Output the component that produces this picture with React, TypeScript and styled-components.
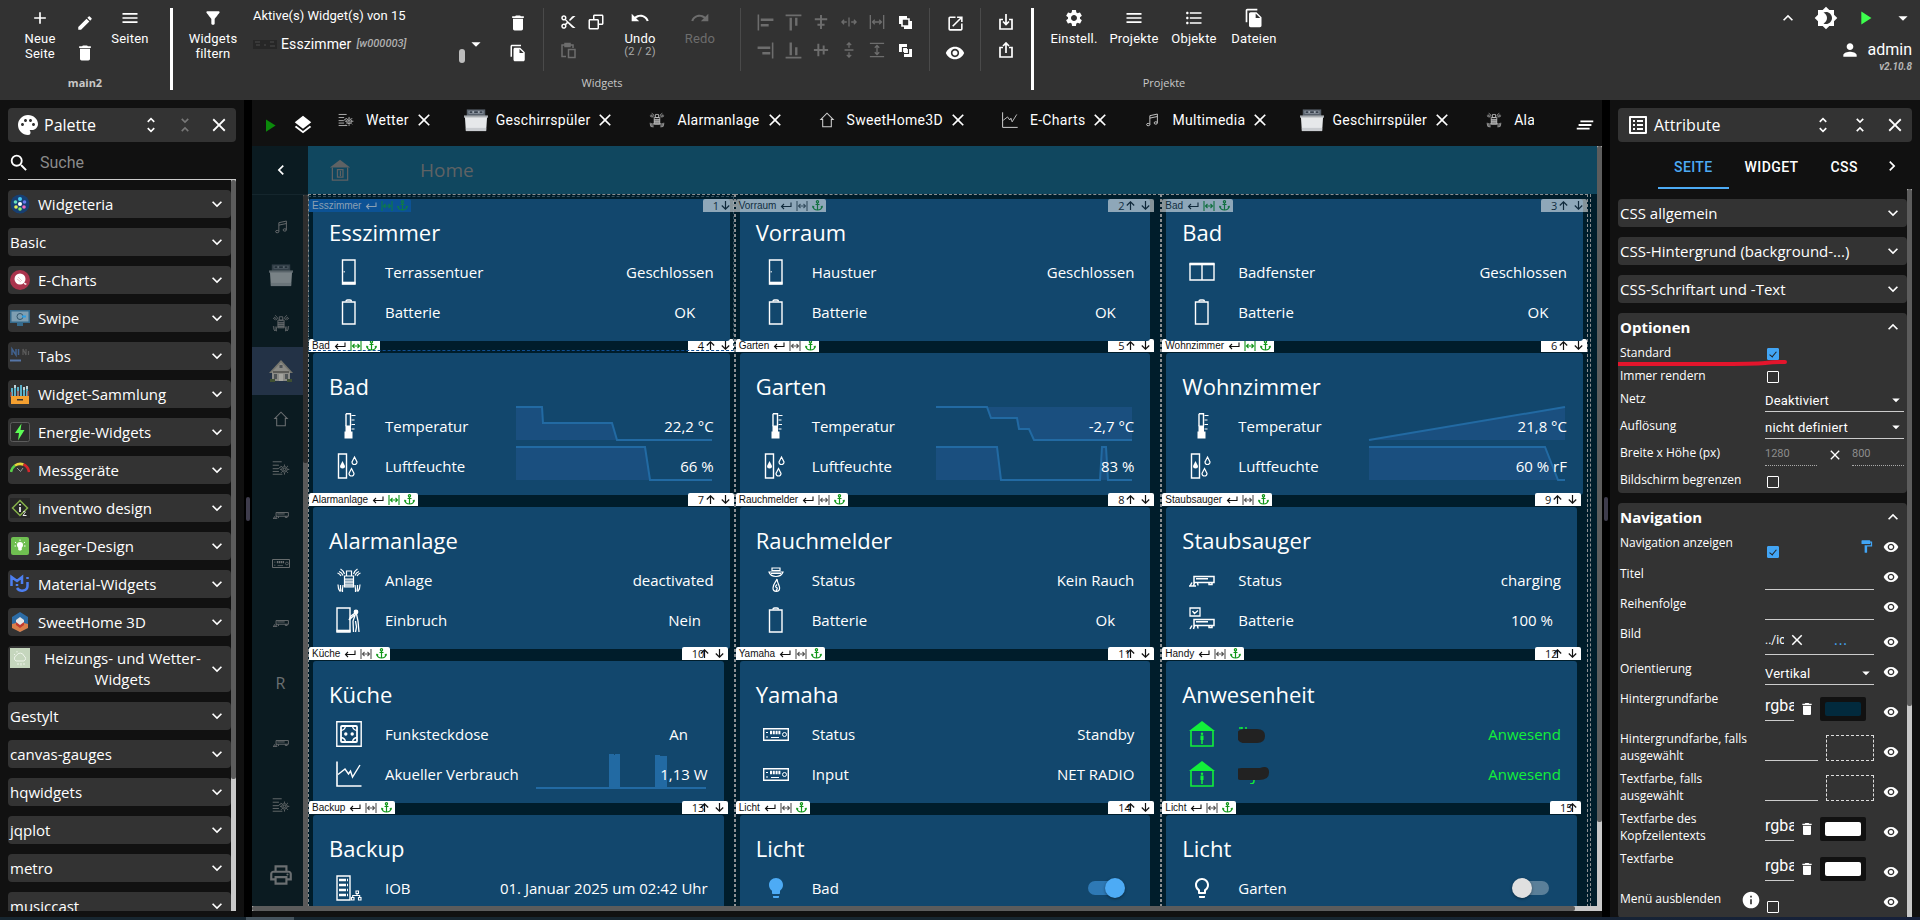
import React from "react";
import styled, { createGlobalStyle, css } from "styled-components";
import {
  MdAdd, MdEdit, MdDelete, MdMenu, MdFilterAlt, MdFileCopy, MdUndo, MdRedo, MdOpenInNew, MdVisibility,
  MdSettings, MdFormatListBulleted, MdBrightness4, MdPlayArrow, MdArrowDropDown, MdPerson, MdKeyboardArrowUp,
  MdKeyboardArrowDown, MdPalette, MdUnfoldMore, MdUnfoldLess, MdClose, MdSearch, MdLayers, MdClearAll,
  MdListAlt, MdOutlinePrint, MdInfo, MdFormatPaint, MdLightbulb, MdOutlineLightbulb, MdChevronLeft,
  MdChevronRight, MdAlignHorizontalLeft, MdAlignHorizontalRight, MdAlignVerticalTop, MdAlignVerticalBottom,
} from "react-icons/md";
import { BiCut, BiCopy } from "react-icons/bi";

const ui = `"Open Sans", "Noto Sans", sans-serif`;
const roboto = `Roboto, "Liberation Sans", sans-serif`;

const GlobalStyle = createGlobalStyle`
  *, *::before, *::after { box-sizing: border-box; }
  html, body { margin: 0; background: #111; overflow: hidden; }
  button, input, select { font: inherit; color: inherit; background: none; border: 0; padding: 0; margin: 0; border-radius: 0; }
  button { cursor: pointer; }
  svg { display: block; flex: none; }
`;

/* ---------- page frame ---------- */
const Page = styled.div`
  display: flex; flex-direction: column; height: 100vh; color: #fff; background: #111;
  font: 15px/20px ${ui};
`;
const Main = styled.main`display: flex; flex: 1; min-height: 0;`;
const Footer = styled.footer`
  height: 3px; flex: none; background: linear-gradient(90deg, #172630 0 246px, #45535d 246px 294px, #172630 294px 70%, #16203a);
`;
const Splitter = styled.div`
  width: 8px; flex: none; background: #000; display: flex; align-items: center; justify-content: center;
  &::after { content: ""; width: 4px; height: 24px; border-radius: 2px; background: #3e3c4c; }
`;
const Track = styled.div<{ $thumb: string; $color?: string; $rest?: string; $row?: boolean }>`
  flex: none; ${p => (p.$row ? "height: 5px" : "width: 5px")};
  background: ${p => p.$rest ?? "#c9c9c9"};
  &::before {
    content: ""; display: block; border-radius: 2px; background: ${p => p.$color ?? "#5c5c5c"};
    ${p => (p.$row ? `height: 5px; width: ${p.$thumb}` : `height: ${p.$thumb}`)};
  }
`;
const BottomGap = styled.div`height: 6px; flex: none;`;

/* ---------- toolbar ---------- */
const Toolbar = styled.header`
  height: 100px; flex: none; background: #323232; display: flex; align-items: flex-start; padding-top: 8px;
  font-family: ${roboto};
`;
const Group = styled.section`display: flex; flex-direction: column; align-items: center;`;
const GroupRow = styled.div`display: flex; align-items: flex-start; height: 67px; padding: 0 10px;`;
const Caption = styled.div<{ $bold?: boolean }>`
  font: ${p => (p.$bold ? 700 : 400)} 11px/16px ${ui}; color: #c8c8c8;
`;
const Bar = styled.div`width: 3px; height: 82px; background: #fff; flex: none;`;
const Thin = styled.div`width: 1px; height: 63px; background: #4a4a4a; margin: 0 10px; flex: none;`;
const BigButton = styled.button<{ $dim?: boolean }>`
  width: 60px; display: flex; flex-direction: column; align-items: center; gap: 3px; color: ${p => (p.$dim ? "#6d6d6d" : "#fff")};
  font: 13px/15px ${roboto}; letter-spacing: 0.2px; text-align: center;
  small { display: block; font-size: 11px; line-height: 12px; color: #aaa; }
`;
const Stack = styled.div<{ $cols?: number; $cell?: number; $w?: number }>`
  display: grid; grid-template-columns: repeat(${p => p.$cols ?? 1}, ${p => p.$w ?? 30}px); grid-auto-rows: ${p => p.$cell ?? 30}px;
`;
const ToolButton = styled.button<{ $dim?: boolean }>`
  display: grid; place-items: center; color: ${p => (p.$dim ? "#6d6d6d" : "#fff")};
`;
const Active = styled.div`width: 260px; padding: 0 16px 0 10px; font-size: 13px; line-height: 16px;`;
const ActiveSelect = styled.button`
  width: 100%; height: 40px; display: flex; align-items: center; font: 14px/20px ${roboto}; letter-spacing: 0.1px;
  em { font: italic 500 11px/20px ${roboto}; color: #b0b0b0; margin-left: 5px; letter-spacing: 0; }
  svg:first-child { margin-right: 4px; }
`;
const ActiveEnd = styled.span`
  margin-left: auto; display: flex; align-items: center;
  i { width: 6px; height: 14px; border-radius: 3px; background: #bdbdbd; margin-top: 24px; }
`;
const User = styled.div`margin-left: auto; padding-right: 8px; display: flex; flex-direction: column; align-items: flex-end;`;
const UserIcons = styled.div`display: flex; height: 20px; align-items: center; gap: 16px; margin-right: -2px;`;
const UserName = styled.div`display: flex; align-items: center; gap: 8px; font: 16px/20px ${roboto}; margin-top: 12px;`;
const Version = styled.div`font: italic 700 10px/14px ${roboto}; color: #b5b5b5;`;

/* ---------- side panels ---------- */
const Panel = styled.aside<{ $w: number }>`
  width: ${p => p.$w}px; flex: none; display: flex; flex-direction: column; padding: 8px 8px 0; background: #111;
`;
const PanelHead = styled.div`
  height: 34px; flex: none; display: flex; align-items: center; background: #333; border-radius: 4px; padding: 0 5px 0 8px; font: 16px/20px ${ui};
  h2 { font: inherit; margin: 0 auto 0 4px; }
`;
const HeadButton = styled.button<{ $dim?: boolean; $w?: number }>`
  width: ${p => p.$w ?? 34}px; height: 34px; display: grid; place-items: center; color: ${p => (p.$dim ? "#777" : "#fff")};
  &:last-child { width: 24px; margin-left: 5px; }
`;
const Search = styled.label`
  display: flex; align-items: center; height: 38px; border-bottom: 1px solid #ccc; flex: none; gap: 10px; padding-top: 5px;
  input { flex: 1; min-width: 0; outline: 0; font-size: 16px; font-family: ${roboto}; }
  input::placeholder { color: #8b8b8b; opacity: 1; }
`;
const Scroll = styled.div`flex: 1; min-height: 0; display: flex;`;
const List = styled.div`flex: 1; min-width: 0; overflow: hidden; padding-top: 10px; display: flex; flex-direction: column; gap: 10px;`;
const Fold = styled.button`
  flex: none; min-height: 28px; display: flex; align-items: center; background: #333; border-radius: 4px; padding: 2px 4px 2px 2px;
  font: 15px/21px ${ui}; text-align: left;
  > span { flex: 1; display: flex; align-items: flex-start; gap: 8px; }
`;
const FoldName = styled.span<{ $center?: boolean }>`flex: 1; text-align: ${p => (p.$center ? "center" : "left")};`;
const FoldBadge = styled.svg`width: 20px; height: 20px;`;

/* ---------- attribute panel ---------- */
const Tabs = styled.nav`display: flex; height: 47px; flex: none; padding-left: 40px; align-items: stretch;`;
const TabButton = styled.button<{ $on?: boolean }>`
  padding: 4px 16px 0; font: 500 14px/20px ${roboto}; letter-spacing: 0.4px; color: ${p => (p.$on ? "#4dabf5" : "#fff")};
  border-bottom: 2px solid ${p => (p.$on ? "#4dabf5" : "transparent")};
`;
const NextTab = styled.button`margin-left: auto; padding-right: 10px;`;
const Box = styled.section`flex: none; background: #333; border-radius: 4px; padding: 0 3px 1px 2px;`;
const BoxHead = styled.h3`
  margin: 0; height: 28px; display: flex; align-items: center; justify-content: space-between; font: 700 15px/28px ${ui}; padding-right: 1px;
`;
const Field = styled.div<{ $h: number }>`
  display: grid; grid-template-columns: 145px minmax(0, 1fr) auto; height: ${p => p.$h}px; align-items: end;
  > label { align-self: start; font: 12px/17px ${ui}; padding-top: 3px; display: flex; justify-content: space-between; }
`;
const Cell = styled.div<{ $pad?: number }>`
  display: flex; align-items: flex-end; padding-bottom: ${p => p.$pad ?? 2}px; height: 100%;
`;
const Eye = styled.button`width: 30px; height: 30px; padding-left: 4px; display: grid; place-items: center;`;
const Check = styled.input`
  appearance: none; width: 12px; height: 12px; border: 1px solid #fff; border-radius: 1px; margin: 0 0 2px 2px; display: grid; place-items: center;
  &:checked { background: #42a5f5; border-color: #42a5f5; }
  &:checked::after { content: ""; width: 4px; height: 7px; margin-top: -2px; border: solid #222; border-width: 0 1px 1px 0; transform: rotate(40deg); }
`;
const SelectWrap = styled.div`
  flex: 1; position: relative; border-bottom: 1px solid #ccc; height: 23px;
  select { appearance: none; width: 100%; height: 22px; font: 13px/20px ${roboto}; letter-spacing: 0.2px; outline: 0; }
  svg { position: absolute; right: -1px; top: 2px; pointer-events: none; }
`;
const Line = styled.input<{ $w?: number; $dots?: boolean; $size?: number }>`
  ${p => (p.$w ? `width: ${p.$w}px; flex: none;` : "flex: 1; min-width: 0;")}
  height: ${p => (p.$size === 16 ? 30 : 24)}px; outline: 0; border-bottom: 1px ${p => (p.$dots ? "dotted #aaa" : "solid #ccc")};
  font: ${p => p.$size ?? 12}px/20px ${roboto}; color: ${p => (p.$dots ? "#8d8d8d" : "#fff")};
`;
const FileField = styled.div`
  flex: 1; display: flex; align-items: center; height: 30px; border-bottom: 1px solid #ccc;
  input { width: 19px; font: 12px/20px ${roboto}; outline: 0; }
  button { margin-left: 4px; }
  button + button { margin: 0 0 0 auto; padding-right: 26px; color: #42a5f5; font-size: 14px; letter-spacing: 1px; }
`;
const IconButton = styled.button`display: grid; place-items: center; margin: 0 5px; height: 24px;`;
const Swatch = styled.button<{ $c: string }>`
  width: 46px; height: 24px; border-radius: 2px; background: #111; padding: 5px;
  &::before { content: ""; display: block; height: 14px; border-radius: 2px; background: ${p => p.$c}; }
`;
const EmptySwatch = styled.button`width: 48px; height: 26px; border: 1px dashed #ddd; margin-left: auto;`;
const RedMark = styled.svg`position: absolute; left: -3px; top: 46px; pointer-events: none;`;
const Relative = styled.div`position: relative; flex: none;`;
const Paint = styled.span`margin-left: auto; color: #42a5f5; padding-bottom: 6px;`;
const Between = styled.button`flex: 1; display: grid; place-items: center; height: 22px;`;
const InfoIcon = styled(MdInfo)`margin-right: 4px;`;

/* ---------- centre ---------- */
const Centre = styled.section`flex: 1; min-width: 0; display: flex; flex-direction: column;`;
const TabStrip = styled.nav`height: 46px; flex: none; display: flex; align-items: center; background: #111; font: 14px/20px ${roboto};`;
const StripIcons = styled.div`display: flex; align-items: center; gap: 12px; padding: 4px 5px 0 7px; flex: none;`;
const StripList = styled.div`flex: 1; min-width: 0; display: flex; overflow: hidden; padding-bottom: 6px;`;
const PageTab = styled.div`
  flex: none; display: flex; align-items: center; padding: 0 15px; gap: 5px; height: 32px;
  > button:first-child { display: flex; align-items: center; gap: 8px; letter-spacing: 0.3px; }
`;
const TabIcon = styled.span`width: 24px; display: grid; place-items: center; color: #d0d0d0;`;
const StripEnd = styled.button`padding: 4px 6px 0 40px; flex: none;`;
const View = styled.div`flex: 1; min-height: 0; display: flex; overflow: hidden;`;
const Nav = styled.nav`width: 56px; flex: none; background: #0b1b21; display: flex; flex-direction: column; color: #6b6f71;`;
const NavTop = styled.button`height: 49px; flex: none; width: 56px; padding: 0 0 0 2px; display: grid; place-items: center; border-bottom: 1px solid #15262d; color: #fff;`;
const NavList = styled.div`flex: 1; min-width: 0; overflow: hidden; padding-top: 8px;`;
const NavItem = styled.button<{ $h?: number; $on?: boolean }>`
  width: 100%; height: ${p => p.$h ?? 48}px; display: grid; place-items: center; padding-left: 6px; font: 16px/24px ${ui};
  background: ${p => (p.$on ? "#233246" : "transparent")};
`;
const Dimmed = styled.span`opacity: .5; display: grid;`;
const Canvas = styled.div`flex: 1; min-width: 0; display: flex; flex-direction: column; background: #001d2b;`;
const ViewHead = styled.div`
  height: 48px; flex: none; background: #10475f; display: flex; align-items: center; padding-left: 21px; color: #5f6264;
  h1 { font: 400 19px/28px ${ui}; margin: 0 0 0 69px; }
`;
const Grid = styled.div`
  flex: 1; min-height: 0; display: grid; grid-template-columns: repeat(3, minmax(0, 1fr)); margin-right: 6px; padding-right: 2px; border-right: 1px dashed #8b8f92;
`;
const Column = styled.div`
  border: 1px dashed #8b8f92; border-bottom: 0; padding: 4px 4px 0; display: flex; flex-direction: column; gap: 12px;
`;
const Slot = styled.div<{ $narrow?: boolean; $first?: boolean }>`
  position: relative; flex: none; z-index: ${p => (p.$first ? 1 : 0)}; margin-right: ${p => (p.$narrow ? 6 : 0)}px;
`;
const Card = styled.article`
  position: relative; background: #12476d; border-radius: 3px; padding: 15px 0 9px;
  h2 { font: 400 22px/36px ${ui}; margin: 0 16px 2px; }
`;
const Item = styled.div`position: relative; display: flex; align-items: center; height: 40px; padding: 0 16px 0 17px;`;
const ItemIcon = styled.span<{ $green?: boolean }>`
  width: 38px; margin-right: 17px; display: grid; place-items: center; color: ${p => (p.$green ? "#12f03a" : "#fff")};
`;
const Value = styled.span<{ $mid?: boolean; $green?: boolean }>`
  position: relative; margin-left: auto; ${p => p.$mid && "min-width: 58px; text-align: center;"} ${p => p.$green && "color: #12f03a;"}
`;
const Spark = styled.svg`position: absolute; right: 18px; top: 0; overflow: visible;`;
const tag = css<{ $first?: boolean; $selected?: boolean }>`
  position: absolute; height: 13px; top: ${p => (p.$first ? "0" : "-14px")}; display: flex; align-items: center; color: #111;
  background: ${p => (p.$selected ? "#0c5295" : "#fff")}; ${p => p.$first && !p.$selected && "opacity: .52;"}
`;
const Tag = styled.div<{ $first?: boolean; $selected?: boolean }>`
  ${tag} left: -4px; padding: 0 3px; gap: 4px; font: 10px/13px "Liberation Sans", Arial, sans-serif; border-radius: 2px 2px 0 0;
  ${p => p.$selected && "color: #8ba0b3;"}
  svg:nth-of-type(n + 2) { opacity: ${p => (p.$selected ? 0.6 : 1)}; }
`;
const Order = styled.div<{ $first?: boolean }>`
  ${tag} right: -4px; padding: 0 1px 0 10px; font: 11px/13px ${ui}; border-radius: 2px 2px 0 0;
  span { width: 5px; white-space: nowrap; }
  button { width: 15px; display: grid; place-items: center; }
`;
const Selection = styled.div`position: absolute; inset: -3px -4px -10px -5px; border: 1px dashed #35505e; border-bottom-color: #0f4f96; pointer-events: none;`;
const Switch = styled.input<{ checked: boolean }>`
  appearance: none; margin: 0 12px 0 auto; width: 34px; height: 14px; border-radius: 7px; position: relative;
  background: ${p => (p.checked ? "#2e79b5" : "#5a7f99")};
  &::after {
    content: ""; position: absolute; top: -3px; width: 20px; height: 20px; border-radius: 50%; box-shadow: 0 1px 3px #0006;
    ${p => (p.checked ? "right: -3px; background: #4dabf5;" : "left: -3px; background: #e0e0e0;")}
  }
`;

/* ---------- drawings ---------- */
type Draw = { size?: number; w?: number; h?: number; children?: React.ReactNode; sw?: number; vb?: string };
const S = ({ size = 26, w, h, children, sw = 1.4, vb = "0 0 26 26" }: Draw) => (
  <svg width={w ?? size} height={h ?? size} viewBox={vb} fill="none" stroke="currentColor" strokeWidth={sw} aria-hidden="true">{children}</svg>
);
const Door = () => <S><path d="M6.500 1h12.500v24H6.500z" /><path d="M6 24h13.500" strokeWidth="2.600" /><path d="M8.200 12v1.500" strokeWidth="1" /></S>;
const Battery = () => <S><path d="M6.500 3h12.500v22H6.500z" /><path d="M10 2.500c0-1.400.6-1.500 1.500-1.500h2.500c1 0 1.500.1 1.500 1.500" /></S>;
const Window = () => <S><path d="M1 5h24v16H1zM13 5v16M13 12v3" /><path d="M.5 5h25" strokeWidth="2.600" /></S>;
const Thermo = () => (
  <S><path d="M10 .8h4.500v12.500M10 .8v12.500" /><path d="M9.500 12.500h5.500v6h1.500v7h-8v-7h1z" fill="currentColor" stroke="none" /><path d="M15.500 2.500h4M15.500 7h3M15.500 11.500h3.500M15.500 16h3" strokeWidth="1.200" /></S>
);
const Humid = () => (
  <S><path d="M2.500 1h8v24h-8z" /><path d="M6.500 8l2.500 5a2.500 2.500 0 0 1-5 0z" fill="currentColor" stroke="none" /><path d="M18.500 4l2.500 5a2.500 2.500 0 0 1-5 0zM15.500 15.500l2.500 5a2.500 2.500 0 0 1-5 0z" strokeWidth="1.200" /></S>
);
const Alarm = ({ size }: { size?: number }) => (
  <S size={size} sw={1.2}><path d="M10.500 4h5v5h-5zM8.500 9h9v11h-9z" /><path d="M8.500 12h9v8h-9z" fill="currentColor" opacity=".5" stroke="none" /><path d="M8.500 12h9M8.500 15h9M8.500 18h9" />
    <path d="M7 8.500C6.200 6.500 5 5.200 3 4.500M5 9C4.300 7.500 3.200 6.500 1.500 6M8.500 7C7.500 4.500 6.300 3 4.500 2M19 8.500c.8-2 2-3.300 4-4M21 9c.7-1.500 1.800-2.500 3.500-3M17.500 7c1-2.500 2.200-4 4-5M7 18c-.5 3-.8 5-.5 7M4.500 18c-.2 2.500 0 4.500.5 6.500M2 17.500c0 2.500.5 5 2 7M19 18c.5 3 .8 5 .5 7M21.500 18c.2 2.500 0 4.500-.5 6.500M24 17.500c0 2.500-.5 5-2 7" /></S>
);
const Burglar = () => (
  <S><path d="M1 1h13v24H1z" /><path d="M.5 23.800h14" strokeWidth="2.200" /><circle cx="20" cy="5" r="1.700" fill="currentColor" /><path d="M19.500 7l-2.500 7 .5 11M20.500 7l1.500 7 1 11M18.500 8l-5.500 5 2-4 4-3M19.500 14l1 6-1 5" strokeWidth="1.300" /></S>
);
const Socket = () => (
  <S><path d="M.8.8h24.400v24.400H.8z" /><rect x="5" y="5" width="16" height="16" rx="1" strokeWidth="1.800" /><path d="M5 9.500Q9 9 9.500 5M21 9.500Q17 9 16.500 5M5 16.500Q9 17 9.500 21M21 16.500Q17 17 16.500 21" /><circle cx="9.800" cy="13" r="1" fill="currentColor" /><circle cx="16.200" cy="13" r="1" fill="currentColor" /></S>
);
const Graph = ({ size }: { size?: number }) => <S size={size}><path d="M1 .5v24.500h24.500" strokeWidth="1.600" /><path d="M2 13.500l7-5.500 3.500 5 2-3 2 6L24 4" /></S>;
const Server = () => (
  <S><path d="M1 1h13v24H1z" /><path d="M3 5h9M3 10h9M3 15h9M3 20h9" strokeWidth="2.600" strokeDasharray="7 1 1 0" /><path d="M20 16h2.500v2.500H20zM15.500 22.500H18V25h-2.500zM22.500 22.500H25V25h-2.500zM21 18.500v2M16.700 22v-1.500h7V22" strokeWidth="1.100" /></S>
);
const Smoke = () => (
  <S sw={1.2}><path d="M9 1h8v2.500H9zM6 5h14c-1 3-3 4.500-7 4.500S7 8 6 5zM8 6.500h10M11 9.500h4" /><path d="M14 12c-1 3-4 5-4 9a3.300 3.300 0 0 0 6.600 0c0-2.500-2-4-2.600-9zM14 17.500c-1.500 1.500-2 2.500-.5 3s.5 2-.5 3" /></S>
);
const Vacuum = ({ w = 26 }: { w?: number }) => (
  <S w={w} h={w / 2} vb="0 0 26 13"><path d="M5 2.500h20v6H5zM7 4.800h12M3 8.500L1 12M5.500 8.500l-1 3.500M8.500 8.500l.5 3M20 8.500v2h3v-2M0 12h7" strokeWidth="1.500" /></S>
);
const VacuumBattery = () => (
  <S><path d="M1 1h10v8H1zM3.500 4l2 2.500L9 3.500" strokeWidth="1.300" /><path d="M5 12.500h20v6H5zM7 14.800h12M3 18.500L1 22M5.500 18.500l-1 3.500M8.500 18.500l.5 3M20 18.500v2h3v-2" strokeWidth="1.500" /></S>
);
const Receiver = ({ w = 26 }: { w?: number }) => (
  <S w={w} h={w / 2} vb="0 0 26 13"><path d="M.7.7h24.600v11.600H.7z" /><path d="M7 4.500h11" strokeWidth="3.500" strokeDasharray="2 .8" /><path d="M3 4.500h2M3 9h2M8 9.500h8" strokeWidth="1" /><circle cx="21.500" cy="6.500" r="2" strokeWidth="1" /></S>
);
const Present = () => (
  <S><path d="M13 0L26 10H0z" fill="currentColor" stroke="none" /><path d="M2 10v15h22V10" strokeWidth="1.600" /><circle cx="13" cy="12.800" r="1.200" fill="currentColor" stroke="none" /><path d="M13 14.500v4.500" strokeWidth="3" /><path d="M13 19v4" strokeWidth="1.500" /></S>
);
const HouseOne = () => (
  <S size={22}><path d="M13 1L25 10H1z" fill="currentColor" stroke="none" /><path d="M4 10v15h18V10M10 12.500h6.500v9H10zM13.500 14v6" strokeWidth="1.500" /></S>
);
const HomeOutline = ({ size }: { size?: number }) => <S size={size} sw={1.7}><path d="M6 24V12H3L13 2l10 10h-3v12z" /></S>;
const Music = ({ size }: { size?: number }) => (
  <S size={size} sw={1.7}><path d="M9 21V5l14-3v16M9 9.500l14-3" /><ellipse cx="6" cy="21.500" rx="3" ry="2.200" /><ellipse cx="20" cy="18.500" rx="3" ry="2.200" /></S>
);
const Weather = ({ size }: { size?: number }) => (
  <S size={size} sw={1.3}><path d="M1 4h13M1 9h9M1 14h8l4-3M1 18h9M1 22h14" /><circle cx="18" cy="15" r="4" /><circle cx="18" cy="15" r="1.800" /><path d="M18 8v2M18 20v2.500M11.500 15h2M22.500 15H25M13 10l1.500 1.500M23 10l-1.500 1.500M13 20l1.500-1.500M23 20l-1.500-1.500" /></S>
);
const Dishwasher = () => (
  <svg width="24" height="25" viewBox="0 0 26 26" aria-hidden="true"><path d="M3 1h20v7H3z" fill="#57606b" /><path d="M5 2.500h16v3H5z" fill="#9aa3ad" /><path d="M6 3h3v2H6zM11 3h4v2h-4zM17 3h3v2h-3z" fill="#39424d" /><path d="M0 7.500h26v2.500H0z" fill="#a9adb2" /><path d="M1 9.500h24L24 24H2z" fill="#e6e8ea" /><path d="M2 21h22v3.500H2z" fill="#c9ccd0" /></svg>
);
const House = () => (
  <svg width="24" height="24" viewBox="0 0 24 24" aria-hidden="true"><path d="M12 1L24 14H0z" fill="#76766e" /><path d="M12 3.500L21 13v9H3v-9z" fill="#8b8b86" /><path d="M4 12h16v2H4z" fill="#5c5c58" /><path d="M10.500 6h3v3h-3zM5 15h3v5H5zM16 15h3v5h-3z" fill="#4e5356" /><path d="M10 15h4v7h-4z" fill="#a4a49e" /><path d="M1 20h5v3H1zM18 20h5v3h-5z" fill="#3f5033" /></svg>
);
const Enter = () => <S w={12} h={10} vb="0 0 12 10" sw={1.1}><path d="M11 1.500v4H1.500M4 3L1.500 5.500 4 8" /></S>;
const Width = ({ on }: { on?: boolean }) => <S w={12} h={10} vb="0 0 12 10" sw={1.1}><path stroke={on ? "#109618" : "#555"} d="M1 0v10M11 0v10M2.500 5h7M4.500 3l-2 2 2 2M7.500 3l2 2-2 2" /></S>;
const Anchor = () => <S w={11} h={11} vb="0 0 11 11" sw={1.2}><g stroke="#109618"><circle cx="5.500" cy="1.800" r="1.100" /><path d="M5.500 3v7M3.500 4.500h4M1 6.500C1.300 9 3 10 5.500 10S9.700 9 10 6.500M.3 7.500L1 6.300l1.200.9M10.700 7.500L10 6.300l-1.200.9" /></g></S>;
const Arrow = ({ down }: { down?: boolean }) => <S w={9} h={9} vb="0 0 9 9" sw={1.2}><path d={down ? "M4.500 0v8.200M.8 4.500l3.700 3.700 3.700-3.700" : "M4.500 9V.8M.8 4.500L4.500.8l3.700 3.700"} /></S>;
const alignShapes = {
  centerX: "M9 1v16M2 6h14M5 12h8",
  centerY: "M1 9h16M6 2v14M12 4v10",
  spaceX: "M9 4v10M6.500 9H1M11.500 9H17M3.500 6.500L1 9l2.500 2.500M14.500 6.500L17 9l-2.500 2.500",
  fullX: "M1.500 1v16M16.500 1v16M4 9h10M6.500 6.500L4 9l2.500 2.500M11.500 6.500L14 9l-2.500 2.500",
  spaceY: "M4 9h10M9 6.500V1M9 11.500V17M6.500 3.500L9 1l2.500 2.500M6.500 14.500L9 17l2.500-2.500",
  fullY: "M1 1.500h16M1 16.500h16M9 4v10M6.500 6.500L9 4l2.500 2.500M6.500 11.500L9 14l2.500-2.500",
};
const AlignIcon = ({ kind }: { kind: keyof typeof alignShapes }) => <S size={16} vb="0 0 18 18" sw={kind.startsWith("center") ? 2.2 : 1.5}><path d={alignShapes[kind]} /></S>;
const Layer = ({ back }: { back?: boolean }) => (
  <svg width="15" height="15" viewBox="0 0 15 15" aria-hidden="true">
    <path d="M1 1h8v8H1zM6 6h8v8H6z" fill="currentColor" />
    {back ? <path d="M4.500 4.500h6v6h-6z" fill="none" stroke="#323232" strokeWidth="1.200" /> : <path d="M4 4h7v7H4z" fill="#323232" stroke="currentColor" strokeWidth="1.600" />}
    {back && <path d="M7 3.500h4.500V8M3.500 7v4.500H8" fill="none" stroke="#323232" strokeWidth="0" />}
  </svg>
);
const Paste = () => <S size={17} vb="0 0 17 17" sw={1.5}><path d="M6 14.500H2V3h11v3M5 1.500h5v3H5zM8.500 7.500h6.500v8H8.500z" /></S>;
const Port = ({ up }: { up?: boolean }) => (
  <S size={16} vb="0 0 16 16" sw={1.7}><path d="M5 5.500H2V15h12V5.500h-3" /><path d={up ? "M8 11V1.500M5 4l3-3 3 3" : "M8 0v10M5 7.500l3 3 3-3"} /></S>
);
/* names that have been painted over */
const Blotted = ({ second }: { second?: boolean }) => (
  <S w={36} h={20} vb="4 -1 36 20" sw={1.5}>
    <path d={second ? "M20 14v2q0 3-4 3" : "M8 2v2M5 3h3M12 2v2"} stroke="#12f03a" />
    <path d={second ? "M1 8q0-5 7-5h18q8-3 9 3 1 9-10 9H10q-9 1-9-7z" : "M3 10q0-6 8-6h12q8 0 8 7t-8 7H11q-8 0-8-8z"} fill="#222" stroke="none" />
  </S>
);

/* ---------- palette ---------- */
const badges: Record<string, React.ReactNode> = {
  Widgeteria: <><circle cx="10" cy="10" r="9.500" fill="#173f72" /><circle cx="10" cy="5" r="2" fill="#45c8f0" /><circle cx="5.500" cy="8" r="1.800" fill="#67e0c0" /><circle cx="14.500" cy="8" r="1.800" fill="#6a7bf0" /><circle cx="10" cy="10" r="2" fill="#fff" /><circle cx="6" cy="13" r="1.800" fill="#e6f05a" /><circle cx="14" cy="13" r="1.800" fill="#f06ac0" /><circle cx="10" cy="15" r="1.800" fill="#8af06a" /></>,
  "E-Charts": <><circle cx="10" cy="10" r="10" fill="#aa344d" /><circle cx="10" cy="9" r="5.500" fill="#fff" /><path d="M13 12l4 2-2 1z" fill="#fff" /><path d="M8 7l4 4M7 9l4 3" stroke="#e6b8c0" strokeWidth=".8" /></>,
  Swipe: <><path d="M0 2h20v13H0z" fill="#356a8c" /><path d="M1.500 3.500h17v10h-17z" fill="#7f9fb2" /><circle cx="10" cy="8.500" r="3" fill="none" stroke="#33566c" /><path d="M12 8.500h4" stroke="#2aa0e8" strokeWidth="2" /><path d="M7 15h6v3H7z" fill="#356a8c" /></>,
  Tabs: <><path d="M2 9V3l4 6V3M8.500 3v6" stroke="#41628e" strokeWidth="1.500" fill="none" /><path d="M13 9V3l3 6V3M18.500 5v4" stroke="#5a5a5a" strokeWidth="1.200" fill="none" /><path d="M0 14.500h11" stroke="#5676a8" strokeWidth="2" /></>,
  "Widget-Sammlung": <><path d="M2 4v9M5 1v12M8 3v10M11 1v12M14 3v10M17 2v11" stroke="#5ab0c8" strokeWidth="2" /><path d="M5 1v3M14 3v3M17 2v3" stroke="#e0e0e0" strokeWidth="1.500" /><path d="M1 8v5M8 7v6M18 7v5" stroke="#c04a3a" strokeWidth="1.200" /><path d="M1 12h18v8H1z" fill="#f5a030" /><path d="M7 15h6v1.500H7z" fill="#333" /></>,
  "Energie-Widgets": <><rect x=".5" y=".5" width="19" height="19" rx="2" fill="#2b2b2b" stroke="#5c5c5c" /><path d="M11.500 1.500L5 11h4l-1 7.500L14.500 8h-4z" fill="#5cfb55" /></>,
  Messgeräte: <><path d="M1 12A9.500 9.500 0 0 1 5 5.500" stroke="#5ad24a" strokeWidth="2.500" fill="none" /><path d="M5 5.500A9.500 9.500 0 0 1 13.500 4.500" stroke="#e6d53c" strokeWidth="2.500" fill="none" /><path d="M13.500 4.500A9.500 9.500 0 0 1 19 12" stroke="#d8262a" strokeWidth="2.500" fill="none" /><path d="M7 8l3.500 3.500L13 8" stroke="#999" fill="none" /></>,
  "inventwo design": <><path d="M0 0h20v20H0z" fill="#262626" /><path d="M10 2.500l7.500 7.500-7.500 7.500L2.500 10z" fill="none" stroke="#86b04a" strokeWidth="1.500" /><path d="M10 6v1.500M10 9v5" stroke="#eee" strokeWidth="1.800" /><path d="M13 14c2-1.500 3 0 1.500 1.500L13 17.500h3.500" stroke="#eee" fill="none" /></>,
  "Jaeger-Design": <><rect x="1" y="1" width="18" height="18" rx="2" fill="#6fbf51" /><circle cx="10" cy="9" r="3" fill="#fff" /><path d="M8.800 11h2.400v3H8.800zM10 3.500v1.500M5 6l1.200 1M15 6l-1.200 1M4.500 10H6M14 10h1.500" stroke="#fff" fill="#fff" /></>,
  "Material-Widgets": <path d="M1.500 12V3l5.500 4 5-4v7M7 14c3 4.500 10.500 3 10.500-2V8M17.500 3v2M7 10v2" fill="none" stroke="#4d7ff0" strokeWidth="2.500" />,
  "SweetHome 3D": <><path d="M10 0l8 5v10l-8 5-8-5V5z" fill="#2c6ca6" /><path d="M10 10l8 2v4l-8 4-8-4v-4z" fill="#d97f4a" /><path d="M6 8l4-3 4 3v5H6z" fill="#e6e6e6" /><path d="M6 10l4 3 4-3v3l-4 3-4-3z" fill="#c23a30" /></>,
  "Heizungs- und Wetter-Widgets": <><path d="M0 0h20v20H0z" fill="#c5d6bd" /><path d="M6 13a3 3 0 0 1 .5-5.500A4 4 0 0 1 14 8a2.800 2.800 0 0 1 0 5zM8 15v2M11 15v2.500M14 15v2M4 6l1 1M7 3v1.500" fill="none" stroke="#eef4ea" /></>,
};
const sets = ["Widgeteria", "Basic", "E-Charts", "Swipe", "Tabs", "Widget-Sammlung", "Energie-Widgets", "Messgeräte", "inventwo design", "Jaeger-Design", "Material-Widgets", "SweetHome 3D", "Heizungs- und Wetter-Widgets", "Gestylt", "canvas-gauges", "hqwidgets", "jqplot", "metro", "musiccast"];

const FoldRow = ({ name }: { name: string }) => (
  <Fold>
    <span>
      {badges[name] && <FoldBadge viewBox="0 0 20 20" aria-hidden="true">{badges[name]}</FoldBadge>}
      <FoldName $center={name.startsWith("Heizungs")}>{name}</FoldName>
    </span>
    <MdKeyboardArrowDown size={20} />
  </Fold>
);

/* ---------- widgets ---------- */
type Row = { icon: React.ReactNode; name: React.ReactNode; value?: string; mid?: boolean; green?: boolean; chart?: [string, string, number?]; on?: boolean };
type Widget = { title: string; tag?: string; no: number; narrow?: boolean; wide?: boolean; rows: Row[] };
const R = (icon: React.ReactNode, name: React.ReactNode, value: string, o: Partial<Row> = {}): Row => ({ icon, name, value, ...o });
const under = (line: string): [string, string] => [line, `M0 34L${line.slice(1)}V34z`];

const columns: Widget[][] = [
  [
    { title: "Esszimmer", no: 1, wide: true, rows: [R(<Door />, "Terrassentuer", "Geschlossen"), R(<Battery />, "Batterie", "OK", { mid: true })] },
    { title: "Bad", no: 4, wide: true, rows: [R(<Thermo />, "Temperatur", "22,2 °C", { chart: under("M0 1H26L27 17H96L101 34H196") }), R(<Humid />, "Luftfeuchte", "66 %", { chart: under("M0 1H129L134 34H196") })] },
    { title: "Alarmanlage", no: 7, wide: true, rows: [R(<Alarm />, "Anlage", "deactivated"), R(<Burglar />, "Einbruch", "Nein", { mid: true })] },
    { title: "Küche", no: 10, narrow: true, rows: [R(<Socket />, "Funksteckdose", "An", { mid: true }), R(<Graph />, "Akueller Verbrauch", "1,13 W", { chart: ["M0 34H170M74 34V1H77V34H80V1H83V34M120 34V2H123V34H126V3H130V34", "M74 1h9v33h-9zM120 2h10v32h-10z", 170] })] },
    { title: "Backup", no: 13, narrow: true, rows: [R(<Server />, "IOB", "01. Januar 2025 um 02:42 Uhr")] },
  ],
  [
    { title: "Vorraum", no: 2, narrow: true, rows: [R(<Door />, "Haustuer", "Geschlossen"), R(<Battery />, "Batterie", "OK", { mid: true })] },
    { title: "Garten", no: 5, narrow: true, rows: [R(<Thermo />, "Temperatur", "-2,7 °C", { chart: ["M0 1H51L55 12H81L83 23H93L98 34H196", "M51 1L55 12H81L83 23H93L98 34H196V1z"] }), R(<Humid />, "Luftfeuchte", "83 %", { chart: under("M0 1H61L65 34H164L166 1H170L172 34H196") })] },
    { title: "Rauchmelder", no: 8, narrow: true, rows: [R(<Smoke />, "Status", "Kein Rauch"), R(<Battery />, "Batterie", "Ok", { mid: true })] },
    { title: "Yamaha", no: 11, narrow: true, rows: [R(<Receiver />, "Status", "Standby"), R(<Receiver />, "Input", "NET RADIO")] },
    { title: "Licht", no: 14, narrow: true, rows: [{ icon: <MdLightbulb size={24} color="#4dabf5" />, name: "Bad", on: true }] },
  ],
  [
    { title: "Bad", no: 3, wide: true, rows: [R(<Window />, "Badfenster", "Geschlossen"), R(<Battery />, "Batterie", "OK", { mid: true })] },
    { title: "Wohnzimmer", no: 6, wide: true, rows: [R(<Thermo />, "Temperatur", "21,8 °C", { chart: under("M0 34L196 1") }), R(<Humid />, "Luftfeuchte", "60 % rF", { chart: under("M0 1H176L189 34H196") })] },
    { title: "Staubsauger", no: 9, narrow: true, rows: [R(<Vacuum />, "Status", "charging"), R(<VacuumBattery />, "Batterie", "100 %", { mid: true })] },
    { title: "Anwesenheit", tag: "Handy", no: 12, narrow: true, rows: [R(<Present />, <Blotted />, "Anwesend", { green: true }), R(<Present />, <Blotted second />, "Anwesend", { green: true })] },
    { title: "Licht", no: 15, narrow: true, rows: [{ icon: <MdOutlineLightbulb size={24} />, name: "Garten", on: false }] },
  ],
];

const WidgetCard = ({ w, index }: { w: Widget; index: number }) => {
  const first = index === 0;
  const selected = w.no === 1;
  return (
    <Slot $narrow={w.narrow} $first={first}>
      <Card>
        <h2>{w.title}</h2>
        {w.rows.map((r, i) => (
          <Item key={i}>
            {r.chart && (
              <Spark width={r.chart[2] ?? 196} height="36" aria-hidden="true">
                <path d={r.chart[1]} fill={r.chart[2] ? "#226aa3" : "#1a4f7f"} /><path d={r.chart[0]} fill="none" stroke="#226aa3" strokeWidth="2" />
              </Spark>
            )}
            <ItemIcon $green={r.green}>{r.icon}</ItemIcon>
            <span>{r.name}</span>
            {r.on === undefined
              ? <Value $mid={r.mid} $green={r.green}>{r.value}</Value>
              : <Switch type="checkbox" role="switch" aria-label={`Licht ${r.name}`} checked={r.on} readOnly />}
          </Item>
        ))}
      </Card>
      {selected && <Selection />}
      <Tag $first={first} $selected={selected}>{w.tag ?? w.title}<Enter /><Width on={w.wide} /><Anchor /></Tag>
      <Order $first={first}>
        <span>{w.no}</span>
        {w.no !== 1 && <button aria-label="Nach oben"><Arrow /></button>}
        {w.no !== 15 && <button aria-label="Nach unten"><Arrow down /></button>}
      </Order>
    </Slot>
  );
};

const pages: [string, React.ReactNode][] = [
  ["Wetter", <Weather size={16} />], ["Geschirrspüler", <Dishwasher />], ["Alarmanlage", <Alarm size={16} />], ["SweetHome3D", <HomeOutline size={16} />],
  ["E-Charts", <Graph size={16} />], ["Multimedia", <Music size={14} />], ["Geschirrspüler", <Dishwasher />], ["Ala", <Alarm size={16} />],
];
const nav: [string, React.ReactNode, number?][] = [
  ["Multimedia", <Music size={14} />], ["Geschirrspüler", <Dimmed><Dishwasher /></Dimmed>], ["Alarmanlage", <Alarm size={18} />], ["Home", <House />], ["SweetHome3D", <HomeOutline size={16} />],
  ["Wetter", <Weather size={18} />, 50], ["Staubsauger", <Vacuum w={16} />, 44], ["Receiver", <Receiver w={18} />, 52], ["Sauger oben", <Vacuum w={16} />, 68], ["R", "R", 52],
  ["Sauger unten", <Vacuum w={16} />, 68], ["Wetter 2", <Weather size={18} />, 56], ["Drucker", <MdOutlinePrint size={26} />, 84],
];

/* ---------- attribute fields ---------- */
const EyeIcon = ({ of }: { of: string }) => <Eye aria-label={`${of} sichtbar`}><MdVisibility size={16} /></Eye>;
const Select = ({ id, value }: { id: string; value: string }) => (
  <SelectWrap><select id={id} defaultValue={value}><option>{value}</option></select><MdArrowDropDown size={18} /></SelectWrap>
);
const ColorRow = ({ id, label, value, color }: { id: string; label: string; value?: string; color?: string }) => (
  <Field $h={40}>
    <label htmlFor={id}>{label}</label>
    {color
      ? <Cell $pad={6}><Line id={id} $w={29} $size={16} defaultValue={value} /><IconButton aria-label="Löschen"><MdDelete size={16} /></IconButton><Swatch $c={color} aria-label={`${label} wählen`} /></Cell>
      : <Cell $pad={6}><Line id={id} $w={53} /><EmptySwatch aria-label={`${label} wählen`} /></Cell>}
    <EyeIcon of={label} />
  </Field>
);

export default function App() {
  return (
    <Page>
      <GlobalStyle />
      <Toolbar>
        <Group>
          <GroupRow>
            <BigButton><MdAdd size={20} /><span>Neue<br />Seite</span></BigButton>
            <Stack><ToolButton aria-label="Bearbeiten"><MdEdit size={18} /></ToolButton><ToolButton aria-label="Löschen"><MdDelete size={20} /></ToolButton></Stack>
            <BigButton><MdMenu size={20} />Seiten</BigButton>
          </GroupRow>
          <Caption $bold>main2</Caption>
        </Group>
        <Bar />
        <Group>
          <GroupRow>
            <BigButton><MdFilterAlt size={20} />Widgets filtern</BigButton>
            <Active>
              Aktive(s) Widget(s) von 15
              <ActiveSelect aria-haspopup="listbox">
                <svg width="24" height="9" viewBox="0 0 24 9" aria-hidden="true"><path d="M0 0h24v9H0z" fill="#272727" /><path d="M2 2h5M3 5h4M11 5h2M17 2h4M17 6h5" stroke="#4c4c4c" /></svg>
                Esszimmer<em>[w000003]</em>
                <ActiveEnd><i /><MdArrowDropDown size={22} /></ActiveEnd>
              </ActiveSelect>
            </Active>
            <Stack><ToolButton aria-label="Widget löschen"><MdDelete size={20} /></ToolButton><ToolButton aria-label="Duplizieren"><MdFileCopy size={18} /></ToolButton></Stack>
            <Thin />
            <Stack $cols={2} $w={28} $cell={28}>
              <ToolButton aria-label="Ausschneiden"><BiCut size={18} /></ToolButton>
              <ToolButton aria-label="Kopieren"><BiCopy size={18} /></ToolButton>
              <ToolButton $dim aria-label="Einfügen"><Paste /></ToolButton>
            </Stack>
            <BigButton><MdUndo size={20} /><span>Undo<small>(2 / 2)</small></span></BigButton>
            <BigButton $dim><MdRedo size={20} />Redo</BigButton>
            <Thin />
            <Stack $cols={6} $w={28} $cell={28}>
              <ToolButton $dim aria-label="Links"><MdAlignHorizontalLeft size={19} /></ToolButton>
              <ToolButton $dim aria-label="Oben"><MdAlignVerticalTop size={19} /></ToolButton>
              <ToolButton $dim aria-label="Mitte horizontal"><AlignIcon kind="centerX" /></ToolButton>
              <ToolButton $dim aria-label="Breite"><AlignIcon kind="spaceX" /></ToolButton>
              <ToolButton $dim aria-label="Volle Breite"><AlignIcon kind="fullX" /></ToolButton>
              <ToolButton aria-label="Nach vorne"><Layer /></ToolButton>
              <ToolButton $dim aria-label="Rechts"><MdAlignHorizontalRight size={19} /></ToolButton>
              <ToolButton $dim aria-label="Unten"><MdAlignVerticalBottom size={19} /></ToolButton>
              <ToolButton $dim aria-label="Mitte vertikal"><AlignIcon kind="centerY" /></ToolButton>
              <ToolButton $dim aria-label="Höhe"><AlignIcon kind="spaceY" /></ToolButton>
              <ToolButton $dim aria-label="Volle Höhe"><AlignIcon kind="fullY" /></ToolButton>
              <ToolButton aria-label="Nach hinten"><Layer back /></ToolButton>
            </Stack>
            <Thin />
            <Stack><ToolButton aria-label="Öffnen"><MdOpenInNew size={19} /></ToolButton><ToolButton aria-label="Vorschau"><MdVisibility size={20} /></ToolButton></Stack>
            <Thin />
            <Stack $cell={28}><ToolButton aria-label="Importieren"><Port /></ToolButton><ToolButton aria-label="Exportieren"><Port up /></ToolButton></Stack>
          </GroupRow>
          <Caption>Widgets</Caption>
        </Group>
        <Bar />
        <Group>
          <GroupRow>
            <BigButton><MdSettings size={20} />Einstell.</BigButton>
            <BigButton><MdMenu size={20} />Projekte</BigButton>
            <BigButton><MdFormatListBulleted size={20} />Objekte</BigButton>
            <BigButton><MdFileCopy size={20} />Dateien</BigButton>
          </GroupRow>
          <Caption>Projekte</Caption>
        </Group>
        <User>
          <UserIcons>
            <ToolButton aria-label="Einklappen"><MdKeyboardArrowUp size={20} /></ToolButton>
            <ToolButton aria-label="Thema"><MdBrightness4 size={24} /></ToolButton>
            <ToolButton aria-label="Starten"><MdPlayArrow size={22} color="#3dff4d" /></ToolButton>
            <ToolButton aria-label="Mehr"><MdArrowDropDown size={22} /></ToolButton>
          </UserIcons>
          <UserName><MdPerson size={20} />admin</UserName>
          <Version>v2.10.8</Version>
        </User>
      </Toolbar>
      <Main>
        <Panel $w={244}>
          <PanelHead>
            <MdPalette size={24} /><h2>Palette</h2>
            <HeadButton aria-label="Alle ausklappen"><MdUnfoldMore size={20} /></HeadButton>
            <HeadButton $dim aria-label="Alle einklappen"><MdUnfoldLess size={20} /></HeadButton>
            <HeadButton aria-label="Schließen"><MdClose size={22} /></HeadButton>
          </PanelHead>
          <Search><MdSearch size={22} /><input aria-label="Suche" placeholder="Suche" /></Search>
          <Scroll>
            <List>{sets.map(n => <FoldRow key={n} name={n} />)}</List>
            <Track $thumb="82%" />
          </Scroll>
          <BottomGap />
        </Panel>
        <Splitter />
        <Centre>
          <TabStrip>
            <StripIcons>
              <ToolButton aria-label="Ansicht starten"><MdPlayArrow size={21} color="#0b8a0b" /></ToolButton>
              <ToolButton aria-label="Ebenen"><MdLayers size={22} /></ToolButton>
            </StripIcons>
            <StripList>
              {pages.map(([name, icon], i) => (
                <PageTab key={i}>
                  <button><TabIcon>{icon}</TabIcon>{name}</button>
                  {name !== "Ala" && <button aria-label={`${name} schließen`}><MdClose size={20} /></button>}
                </PageTab>
              ))}
            </StripList>
            <StripEnd aria-label="Alle Seiten"><MdClearAll size={22} /></StripEnd>
          </TabStrip>
          <View>
            <Nav>
              <NavTop aria-label="Menü schließen"><MdChevronLeft size={20} /></NavTop>
              <Scroll>
                <NavList>
                  {nav.map(([name, icon, h]) => <NavItem key={name} $h={h} $on={name === "Home"} aria-label={name}>{icon}</NavItem>)}
                </NavList>
                <Track $thumb="268px" $color="#2e2e2e" $rest="#5a5a5a" />
              </Scroll>
            </Nav>
            <Canvas>
              <ViewHead><HouseOne /><h1>Home</h1></ViewHead>
              <Grid>
                {columns.map((col, c) => <Column key={c}>{col.map((w, i) => <WidgetCard key={w.no} w={w} index={i} />)}</Column>)}
              </Grid>
            </Canvas>
            <Track $thumb="89%" />
          </View>
          <Track $row $thumb="98%" />
          <BottomGap />
        </Centre>
        <Splitter />
        <Panel $w={310}>
          <PanelHead>
            <MdListAlt size={24} /><h2>Attribute</h2>
            <HeadButton $w={37} aria-label="Alle ausklappen"><MdUnfoldMore size={20} /></HeadButton>
            <HeadButton $w={37} aria-label="Alle einklappen"><MdUnfoldLess size={20} /></HeadButton>
            <HeadButton aria-label="Schließen"><MdClose size={22} /></HeadButton>
          </PanelHead>
          <Tabs>
            <TabButton $on>SEITE</TabButton><TabButton>WIDGET</TabButton><TabButton>CSS</TabButton>
            <NextTab aria-label="Weitere"><MdChevronRight size={20} /></NextTab>
          </Tabs>
          <Scroll>
            <List>
              <FoldRow name="CSS allgemein" />
              <FoldRow name="CSS-Hintergrund (background-...)" />
              <FoldRow name="CSS-Schriftart und -Text" />
              <Relative>
                <Box>
                  <BoxHead>Optionen<MdKeyboardArrowUp size={20} /></BoxHead>
                  <Field $h={23}><label htmlFor="std">Standard</label><Cell><Check id="std" type="checkbox" defaultChecked /></Cell></Field>
                  <Field $h={23}><label htmlFor="render">Immer rendern</label><Cell><Check id="render" type="checkbox" /></Cell></Field>
                  <Field $h={27}><label htmlFor="grid">Netz</label><Cell><Select id="grid" value="Deaktiviert" /></Cell></Field>
                  <Field $h={27}><label htmlFor="res">Auflösung</label><Cell><Select id="res" value="nicht definiert" /></Cell></Field>
                  <Field $h={27}>
                    <label htmlFor="size">Breite x Höhe (px)</label>
                    <Cell><Line id="size" $w={52} $dots defaultValue="1280" $size={11} /><Between aria-label="Tauschen"><MdClose size={16} /></Between><Line $w={52} $dots aria-label="Höhe" $size={11} defaultValue="800" /></Cell>
                  </Field>
                  <Field $h={24}><label htmlFor="limit">Bildschirm begrenzen</label><Cell><Check id="limit" type="checkbox" /></Cell></Field>
                </Box>
                <RedMark width="176" height="12" viewBox="0 0 176 12" aria-hidden="true"><path d="M3 5Q60 5 100 5T150 4T170 3" fill="none" stroke="#e3152c" strokeWidth="4" strokeLinecap="round" /></RedMark>
              </Relative>
              <Box>
                <BoxHead>Navigation<MdKeyboardArrowUp size={20} /></BoxHead>
                <Field $h={31}><label htmlFor="nav">Navigation anzeigen</label><Cell><Check id="nav" type="checkbox" defaultChecked /><Paint><MdFormatPaint size={15} /></Paint></Cell><EyeIcon of="Navigation" /></Field>
                <Field $h={30}><label htmlFor="title">Titel</label><Cell><Line id="title" /></Cell><EyeIcon of="Titel" /></Field>
                <Field $h={30}><label htmlFor="order">Reihenfolge</label><Cell><Line id="order" /></Cell><EyeIcon of="Reihenfolge" /></Field>
                <Field $h={35}>
                  <label htmlFor="img">Bild</label>
                  <Cell><FileField><input id="img" defaultValue="../icons/home.svg" /><button aria-label="Leeren"><MdClose size={18} /></button><button aria-label="Datei wählen">...</button></FileField></Cell>
                  <EyeIcon of="Bild" />
                </Field>
                <Field $h={30}><label htmlFor="dir">Orientierung</label><Cell><Select id="dir" value="Vertikal" /></Cell><EyeIcon of="Orientierung" /></Field>
                <ColorRow id="bg" label="Hintergrundfarbe" value="rgba(0,42,61,1)" color="#022a3d" />
                <ColorRow id="bgs" label="Hintergrundfarbe, falls ausgewählt" />
                <ColorRow id="fgs" label="Textfarbe, falls ausgewählt" />
                <ColorRow id="hd" label="Textfarbe des Kopfzeilentexts" value="rgba(255,255,255,1)" color="#fff" />
                <ColorRow id="fg" label="Textfarbe" value="rgba(255,255,255,1)" color="#fff" />
                <Field $h={30}><label htmlFor="hide">Menü ausblenden <InfoIcon size={20} /></label><Cell><Check id="hide" type="checkbox" /></Cell><EyeIcon of="Menü" /></Field>
              </Box>
            </List>
            <Track $thumb="71%" />
          </Scroll>
        </Panel>
      </Main>
      <Footer />
    </Page>
  );
}
